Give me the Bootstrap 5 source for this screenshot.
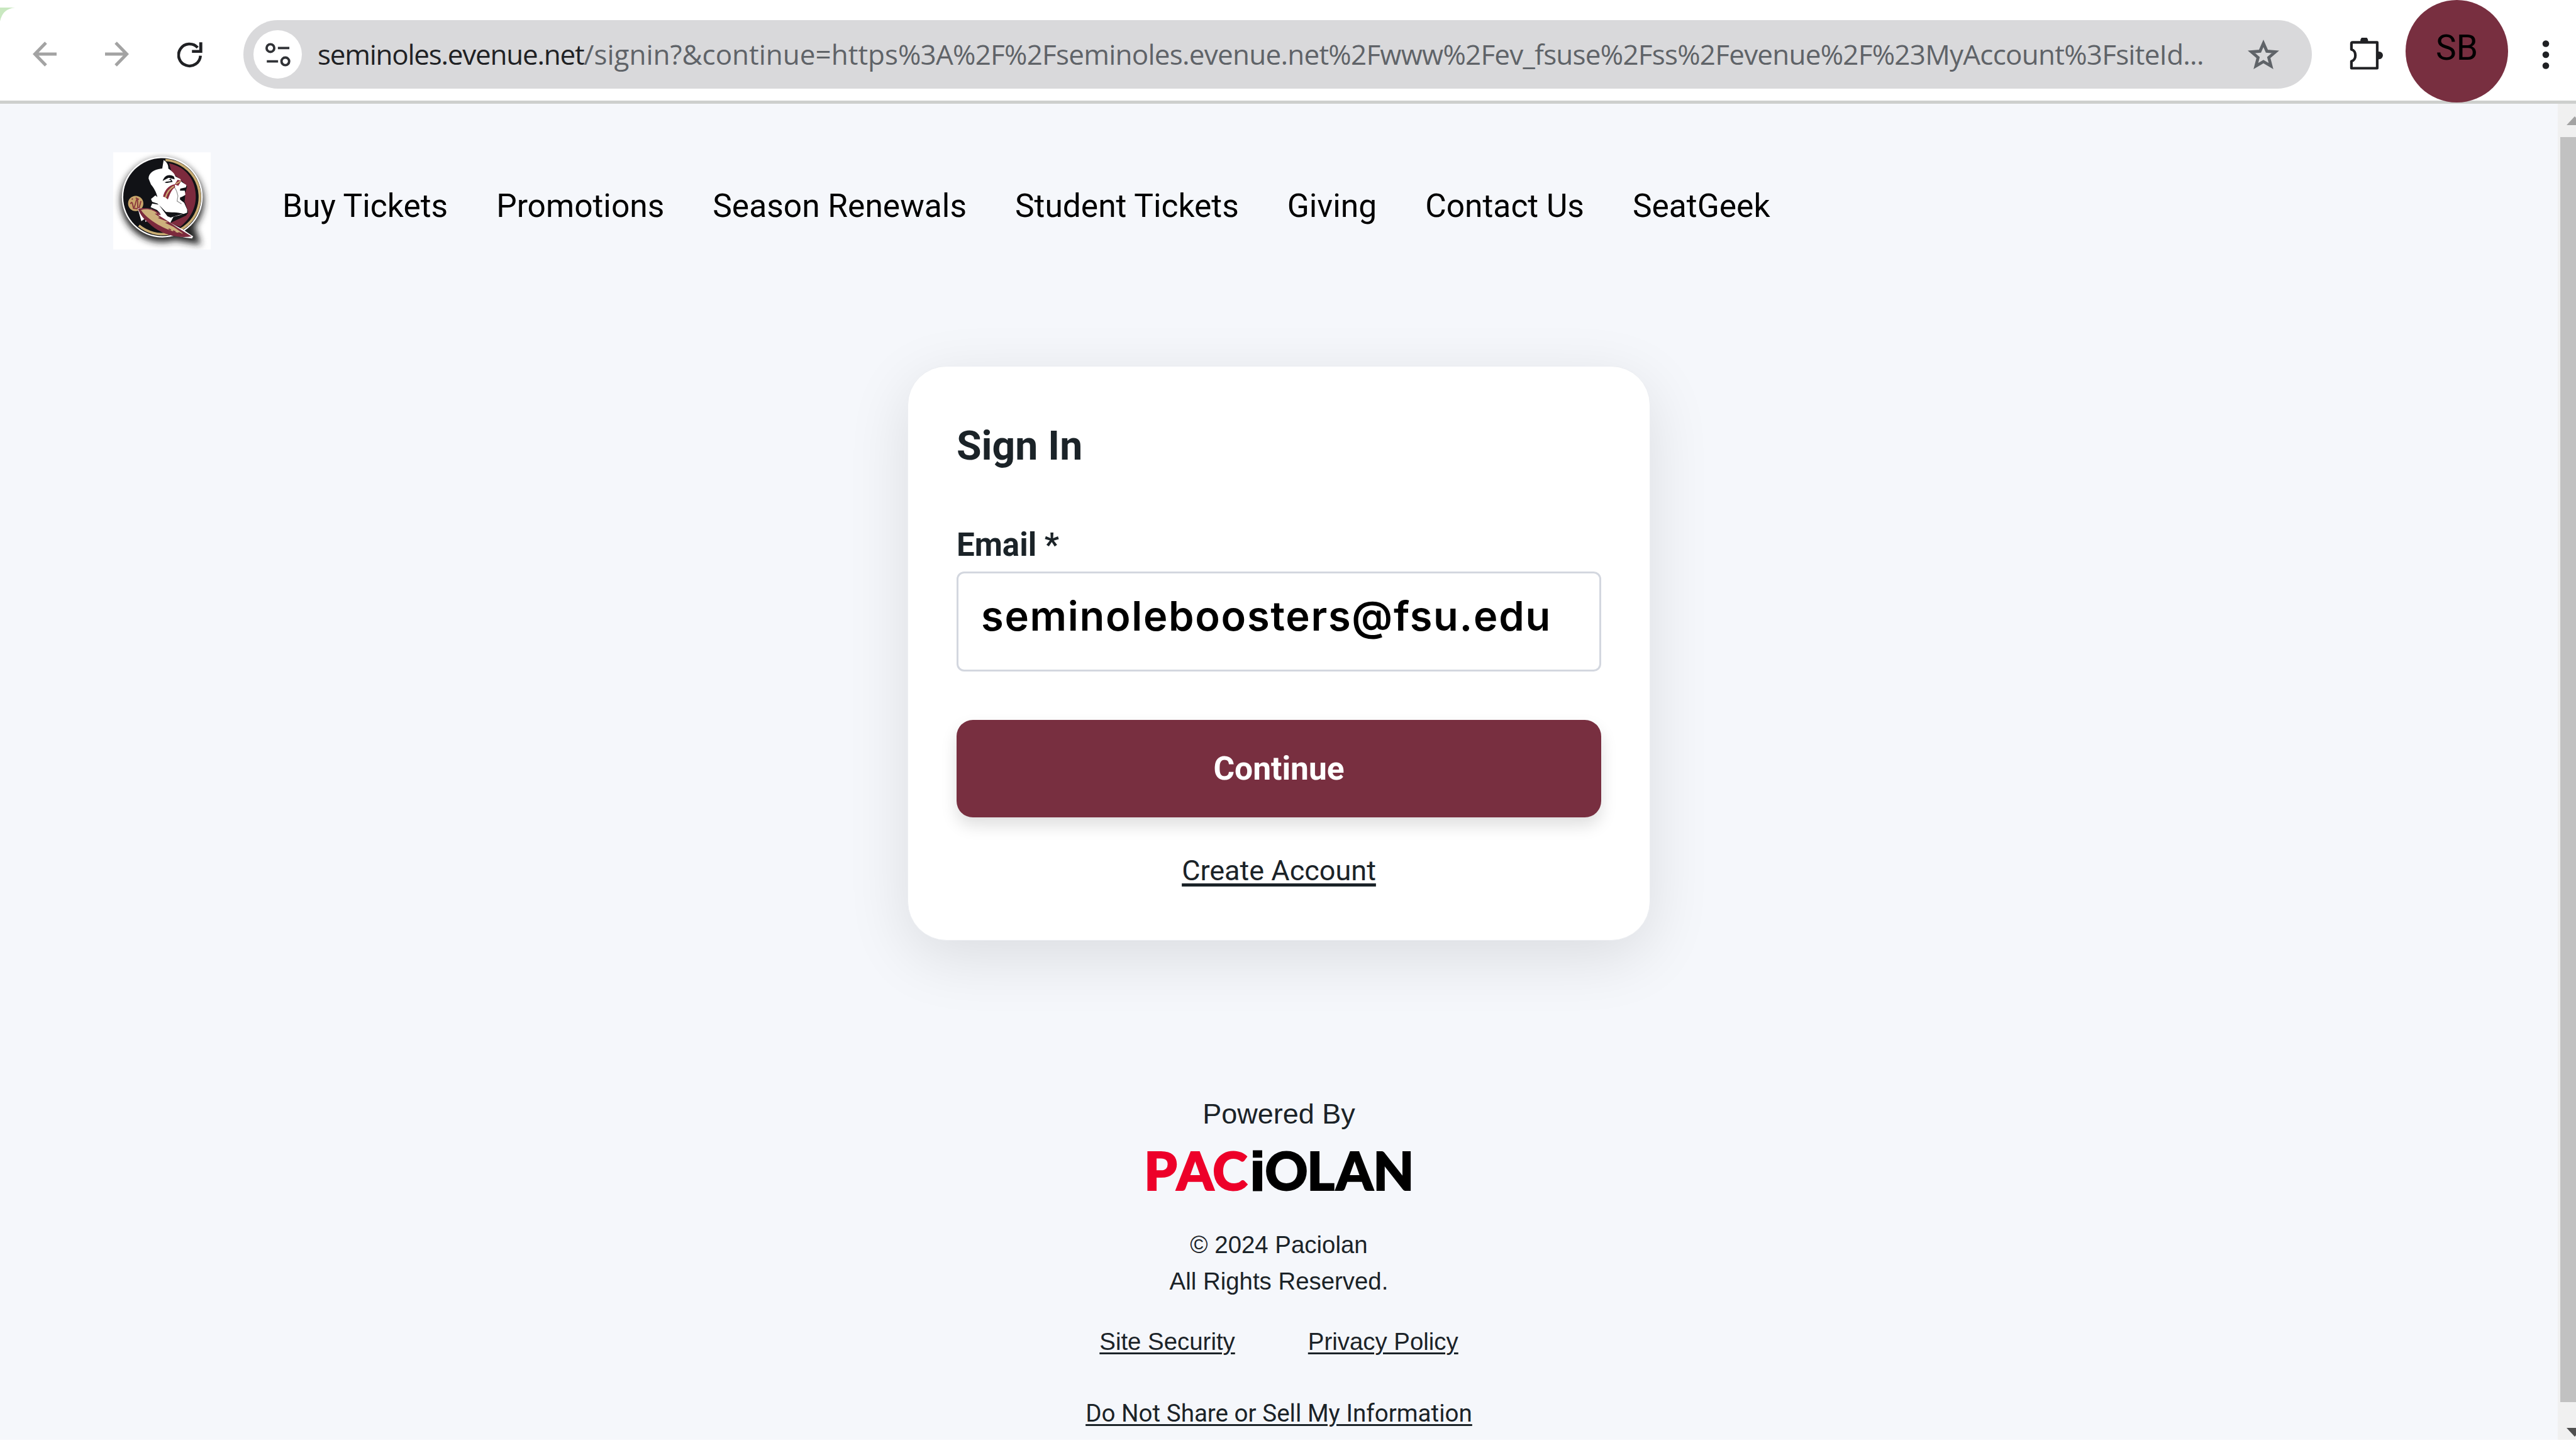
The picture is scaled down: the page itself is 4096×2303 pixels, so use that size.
<!DOCTYPE html>
<html lang="en">
<head>
  <meta charset="utf-8">
  <meta name="viewport" content="width=device-width, initial-scale=1">
  <title>Sign In</title>
  <link href="https://cdn.jsdelivr.net/npm/bootstrap@5.3.6/dist/css/bootstrap.min.css" rel="stylesheet">
  <style>
    body {
      height: 2303px;
      font-family: Roboto, sans-serif;
      color: #1b2328;
    }

    svg { display: block; flex-shrink: 0; }
    a { color: inherit; }

    /* Browser toolbar */
    .toolbar {
      height: 165px;
      padding: 13px 38px 0 52px;
      border-bottom: 5px solid #cdcfcd;
    }
    .corner { position: absolute; left: 0; top: 12px; }
    .nav-arrows { gap: 77px; }
    .address {
      width: 3289px;
      height: 109px;
      margin-left: 65px;
      padding: 0 51px 0 16px;
      border-radius: 55px;
      background: #d9d9db;
      font-family: "Open Sans", sans-serif;
      font-size: 44px;
      letter-spacing: -.75px;
      color: #5f6368;
    }
    .site-info { width: 77px; height: 77px; background: #fff; }
    .url { margin: -2px 0 0 25px; white-space: nowrap; }
    .url b { font-weight: 400; letter-spacing: -1.25px; color: #202124; }
    .url span { letter-spacing: 0; }
    .extensions { margin-left: 60px; }
    .avatar {
      width: 163px;
      height: 163px;
      margin: -11px 54px 0 36px;
      padding-bottom: 10px;
      background: #782f40;
      color: #000;
      font-size: 55px;
      z-index: 1;
    }

    /* Page */
    .page { height: 2125px; background: #f5f7fb; }
    .site-header { padding: 77px 0 0 180px; }
    .menu { gap: 77px; margin-left: 114px; padding-top: 17px; font-size: 51.5px; line-height: 60px; color: #000; }
    .menu a { text-decoration: none; }

    .signin {
      width: 1181px;
      height: 914px;
      margin-top: 185px;
      padding: 87px 77px 0;
      border: 1px solid #eceef2;
      border-radius: 62px;
      box-shadow: 0 26px 100px rgba(0, 0, 0, .11);
      color: #1b2328;
    }
    .signin h1 { margin: 0 0 89px; font-size: 64.300px; line-height: 78px; font-weight: 700; }
    .signin label { margin-bottom: 12px; font-size: 51px; line-height: 60px; font-weight: 700; }
    .signin .form-control {
      height: 159px;
      padding: 0 36px 18px;
      border: 3px solid #d3d7df;
      border-radius: 12px;
      font-family: Inter, sans-serif;
      font-size: 65px;
      font-weight: 600;
      letter-spacing: 1.7px;
      color: #000;
    }
    .btn-continue {
      height: 155px;
      margin-top: 77px;
      border: 0;
      border-radius: 26px;
      font-size: 51.5px;
      font-weight: 700;
      --bs-btn-bg: #782f40;
      --bs-btn-color: #fff;
      box-shadow: 0 13px 26px rgba(0, 0, 0, .13);
    }
    .create { margin-top: 58px; font-size: 45px; line-height: 54px; text-underline-offset: 5px; text-decoration-thickness: 5px; }

    .site-footer { margin-top: 247px; font-family: "Liberation Sans", sans-serif; font-size: 38.4px; line-height: 57.6px; }
    .powered { font-size: 45px; line-height: 58px; margin-bottom: 29px; }
    .copyright { margin-top: 57px; }
    .links { gap: 116px; margin: 39px 0 56px; }
    .privacy { font-family: Roboto, sans-serif; font-size: 38.6px; }
    .site-footer a { text-decoration-thickness: 3px; text-underline-offset: 4px; }

    .scroll-track { width: 29px; padding-left: 4px; background: #f0f0f0; }
    .scroll-thumb { height: 2012px; background: #c1c1c1; }
  </style>
</head>
<body class="bg-white overflow-hidden">
  <header class="toolbar d-flex align-items-center bg-white">
    <svg class="corner" width="24" height="22" viewBox="0 0 24 22"><path d="M0 0H24Q4 2 0 22Z" fill="#c9e8c0"/></svg>
    <div class="nav-arrows d-flex">
      <svg width="38" height="40" viewBox="0 0 38 40" fill="none" stroke="#a3a3a3" stroke-width="5"><path d="M38 20H4M21 2 3.500 20 21 38"/></svg>
      <svg width="38" height="40" viewBox="0 0 38 40" fill="none" stroke="#a3a3a3" stroke-width="5"><path d="M0 20H34M17 2 34.500 20 17 38"/></svg>
      <svg width="40" height="42" viewBox="0 0 124 126"><path d="M114 68A54 54 0 1 1 100 28" fill="none" stroke="#202124" stroke-width="14"/><path d="M72 40H108V2H123V54H72Z" fill="#202124"/></svg>
    </div>
    <div class="address d-flex align-items-center flex-shrink-0">
      <div class="site-info rounded-circle d-flex align-items-center justify-content-center flex-shrink-0">
        <svg width="40" height="38" viewBox="0 0 125 118" fill="none" stroke="#303236" stroke-width="12"><circle cx="25" cy="26" r="19"/><path d="M62 26H119M7 92H63"/><circle cx="99" cy="92" r="19"/></svg>
      </div>
      <div class="url"><b>seminoles.evenue.net</b><span>/signin?&amp;continue=https</span>%3A%2F%2Fseminoles.evenue.net%2Fwww%2Fev_fsuse%2Fss%2Fevenue%2F%23MyAccount%3FsiteId...</div>
      <svg class="ms-auto" width="52" height="49" viewBox="0 0 52 49"><path d="M26 7 31.500 19.500 45 20.500 34.500 29.500 38 43 26 36 14 43 17.500 29.500 7 20.500 20.500 19.500Z" fill="none" stroke="#5f6368" stroke-width="4.800"/></svg>
    </div>
    <svg class="extensions" width="53" height="53" viewBox="45 62 164 164"><path d="M60 85H181V212H54V178C80 172 80 126 54 120V91Q54 85 60 85Z" fill="#fff" stroke="#202124" stroke-width="13" stroke-linejoin="round"/><path d="M98 82V76A19 19 0 0 1 136 76V82ZM184 130H190A19 19 0 0 1 190 168H184Z" fill="#202124"/></svg>
    <div class="avatar rounded-circle d-flex align-items-center justify-content-center flex-shrink-0">SB</div>
    <svg width="12" height="46" viewBox="0 0 12 46" fill="#202124"><circle cx="6" cy="5.500" r="5.300"/><circle cx="6" cy="23" r="5.300"/><circle cx="6" cy="40.500" r="5.300"/></svg>
  </header>

  <div class="page d-flex">
    <div class="flex-grow-1">
      <nav class="site-header d-flex align-items-center">
        <svg width="155" height="155" viewBox="52 65 485 484">
          <defs><filter id="soft" x="-20%" y="-20%" width="140%" height="140%"><feGaussianBlur stdDeviation="17"/></filter></defs>
          <path d="M52 65H537V549H52Z" fill="#fff"/>
          <g filter="url(#soft)" fill="#222"><circle cx="296" cy="306" r="206"/><path d="M300 480 470 510 450 450Z" stroke="#222" stroke-width="24"/></g>
          <circle cx="296" cy="288" r="201" fill="#fff"/>
          <circle cx="296" cy="288" r="194" fill="#111216"/>
          <!-- gold ring and garnet field -->
          <path d="M312 103A185 185 0 1 1 180 430" fill="none" stroke="#c9ad73" stroke-width="12"/>
          <path d="M330 120C420 138 464 210 463 288C462 350 430 402 385 436L335 420 335 380 425 370 380 290Z" fill="#7c2a3d"/>
          <!-- profile -->
          <path d="M303 103 330 135 326 150 350 172 385 200 420 235 412 262 385 292 408 312 425 362 415 380 330 420 240 330 235 190Z" fill="#111216"/>
          <path d="M303 104C315 112 328 125 326 146C340 156 356 168 362 186L386 198 392 212 416 228 414 240 386 246 384 256 408 256 411 276 400 290 386 288 384 300 405 316 420 350 420 366 402 372C370 362 340 366 312 362L272 320 246 312 240 298 262 280 272 288C266 262 252 240 240 226L228 196C228 166 258 150 296 146Z" fill="#fff"/>
          <path d="M240 228 262 278 240 270ZM298 208C308 178 332 172 354 186L358 200 328 192ZM308 216 338 196 348 212 320 218Z" fill="#111216"/>
          <path d="M314 208 338 206" stroke="#fff" stroke-width="7"/>
          <path d="M356 240C370 254 370 270 374 282L370 308 392 322" fill="none" stroke="#999" stroke-width="4"/>
          <path d="M384 292 410 278 408 308 394 308Z" fill="#111216"/>
          <path d="M246 320 278 326 330 380 400 374 352 386 334 420 270 352 238 338Z" fill="#fff"/>
          <path d="M282 330 318 366 396 372 338 390 322 384Z" fill="#111216"/>
          <!-- face paint -->
          <path d="M300 286C305 260 324 230 358 224L360 240C340 252 334 276 324 300L312 290Z" fill="#8b2b3d"/>
          <path d="M312 290C320 264 332 246 354 234" fill="none" stroke="#c9ad73" stroke-width="7"/>
          <path d="M358 226 372 202 392 206 376 232Z" fill="#8b2b3d"/>
          <path d="M364 222 388 208" stroke="#c9ad73" stroke-width="6"/>
          <!-- feather -->
          <circle cx="164" cy="320" r="38" fill="#c9a66b"/>
          <path d="M138 322Q146 304 150 330T164 316 174 326 190 308M144 300 150 296M164 292 180 300M150 344 176 346" fill="none" stroke="#8b3a3d" stroke-width="6"/>
          <path d="M174 344 192 408 212 394 212 412 232 402C280 448 330 482 444 494L450 484 400 450 340 418 290 372 240 346Z" fill="#fff"/>
          <path d="M176 346C216 338 268 346 290 378L274 376 330 412 372 440 442 484C360 496 280 468 230 418C204 398 186 376 176 346Z" fill="#7c2a3d"/>
          <path d="M190 352C220 344 252 350 272 370L258 370 284 388 274 392 326 412 310 416 352 436 400 470C330 462 230 410 190 352Z" fill="#cdb07c"/>
          <path d="M328 446 340 452M350 456 362 460M376 464 390 470M402 474 416 478" stroke="#7c2a3d" stroke-width="5"/>
        </svg>
        <div class="menu d-flex">
          <a href="#">Buy Tickets</a>
          <a href="#">Promotions</a>
          <a href="#">Season Renewals</a>
          <a href="#">Student Tickets</a>
          <a href="#">Giving</a>
          <a href="#">Contact Us</a>
          <a href="#">SeatGeek</a>
        </div>
      </nav>

      <form class="signin card mx-auto">
        <h1>Sign In</h1>
        <label for="email">Email *</label>
        <input id="email" type="text" class="form-control" value="seminoleboosters@fsu.edu">
        <button type="button" class="btn btn-continue w-100">Continue</button>
        <a href="#" class="create align-self-center">Create Account</a>
      </form>

      <footer class="site-footer d-flex flex-column align-items-center text-center">
        <div class="powered">Powered By</div>
        <svg width="418" height="64" viewBox="34 49 1307 200" overflow="visible" font-family="Lato" font-weight="900" font-size="264" stroke-width="6">
          <text x="15 177 356" y="246" fill="#ed0029" stroke="#ed0029">PAC</text>
          <text x="543" y="246" font-family="Liberation Sans" font-weight="700" font-size="266" stroke="#000" stroke-width="10">i</text>
          <text x="616 825 970 1154" y="246" stroke="#000">OLAN</text>
        </svg>
        <div class="copyright">© 2024 Paciolan<br>All Rights Reserved.</div>
        <div class="links d-flex">
          <a href="#">Site Security</a>
          <a href="#">Privacy Policy</a>
        </div>
        <a href="#" class="privacy">Do Not Share or Sell My Information</a>
      </footer>
    </div>
    <div class="scroll-track">
      <svg width="25" height="53" viewBox="0 0 25 53"><path d="M10 34 23 20 36 34Z" fill="#a3a3a3"/></svg>
      <div class="scroll-thumb"></div>
      <svg width="25" height="60" viewBox="0 0 25 60"><path d="M10 41H36L23 55Z" fill="#505050"/></svg>
    </div>
  </div>

  <script src="https://cdn.jsdelivr.net/npm/bootstrap@5.3.6/dist/js/bootstrap.bundle.min.js"></script>
</body>
</html>
